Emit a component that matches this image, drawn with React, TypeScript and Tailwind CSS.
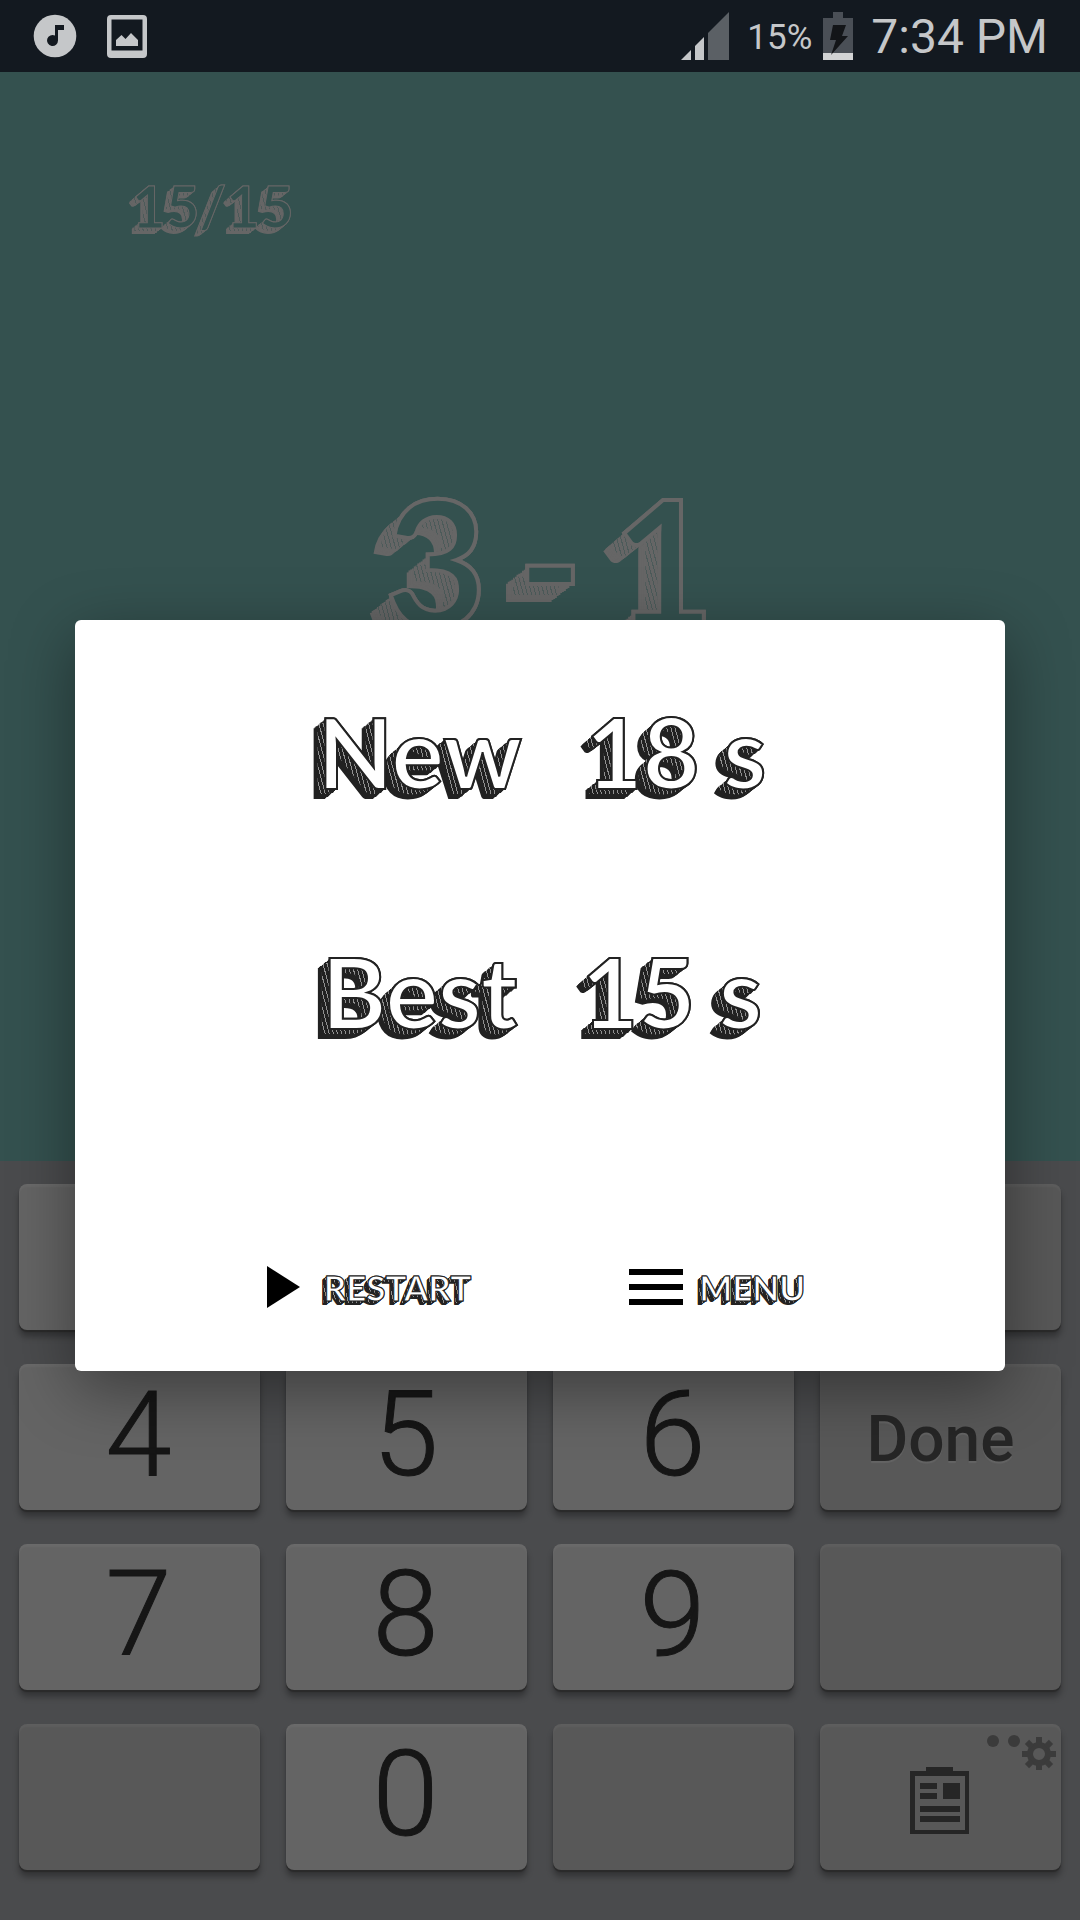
import React from "react";

type Tone = "paper" | "board";

const tones: Record<Tone, string> = {
  paper: "[--ink:#222222] [--face:#ffffff] [--fleck:#ffffff]",
  board: "[--ink:#666666] [--face:#34514f] [--fleck:#34514f]",
};

/** Hand-drawn block lettering: outlined face, hatched side, solid extrusion. */
function Sketch({ text, tone, className }: { text: string; tone: Tone; className: string }) {
  return (
    <span
      data-text={text}
      className={`relative isolate inline-block whitespace-pre font-['Lato',sans-serif] font-bold text-[var(--face)] before:absolute before:top-[0.06em] before:left-[-0.08em] before:-z-10 before:bg-[repeating-linear-gradient(75deg,var(--fleck)_0px,var(--fleck)_1px,transparent_1px,transparent_4px)] before:bg-clip-text before:text-transparent before:opacity-50 before:content-[attr(data-text)] before:[-webkit-text-stroke:0] after:absolute after:top-0 after:left-0 after:-z-20 after:text-[var(--ink)] after:content-[attr(data-text)] after:[text-shadow:-0.01em_0.01em_var(--ink),-0.02em_0.02em_var(--ink),-0.03em_0.03em_var(--ink),-0.04em_0.04em_var(--ink),-0.05em_0.045em_var(--ink),-0.06em_0.05em_var(--ink),-0.07em_0.06em_var(--ink),-0.08em_0.07em_var(--ink),-0.09em_0.08em_var(--ink),-0.1em_0.085em_var(--ink),-0.11em_0.09em_var(--ink),-0.12em_0.1em_var(--ink)] ${tones[tone]} ${className}`}
    >
      {text}
    </span>
  );
}

function StatusBar() {
  return (
    <header className="flex h-[72px] items-center justify-between bg-[#131920] pr-8 pl-[33px] font-['Roboto',sans-serif] text-[#c5c7c9]">
      <div className="flex items-center gap-[30px]">
        <svg viewBox="0 0 44 44" className="size-11" aria-label="Music">
          <circle cx="22" cy="22" r="21.3" fill="#c5c7c9" />
          <path d="M22 11h9v5h-6v10.500a5.500 5.500 0 1 1-3-4.900z" fill="#131920" />
        </svg>
        <svg viewBox="0 0 40 43" className="h-[43px] w-10" aria-label="Picture">
          <path
            fillRule="evenodd"
            d="M4 0h32a4 4 0 0 1 4 4v35a4 4 0 0 1-4 4H4a4 4 0 0 1-4-4V4a4 4 0 0 1 4-4zM4.500 4.500v31h31v-31z"
            fill="#c5c7c9"
          />
          <path d="M9 31v-6l5.500-5 4 4 5.500-6 7 7v6z" fill="#c5c7c9" />
        </svg>
      </div>
      <div className="flex items-center">
        <svg viewBox="0 0 48 48" className="mr-[18px] size-12" aria-label="Signal strength">
          <path d="M0 48l10-10v10z" fill="#c5c7c9" />
          <path d="M14 48V34l9-9v23z" fill="#c5c7c9" />
          <path d="M27 48V21L48 0v48z" fill="#5b6065" />
        </svg>
        <span className="pt-1 text-[35px]">15%</span>
        <svg viewBox="0 0 30 48" className="mr-[18px] ml-[11px] h-12 w-[30px]" aria-label="Battery charging">
          <path d="M10 0h10v6h10v35H0V6h10z" fill="#4a4f56" />
          <path d="M0 41h30v7H0z" fill="#d2d3d4" />
          <path d="M10 13h13l-4 11h6L8 43l5-15H7z" fill="#131518" />
        </svg>
        <span className="pt-[2px] text-5xl">7:34 PM</span>
      </div>
    </header>
  );
}

const keyBase =
  "relative flex h-[146px] items-center justify-center rounded-lg shadow-[0_2px_1px_#2a2a2a,0_7px_6px_rgba(0,0,0,0.3),inset_0_3px_2px_rgba(255,255,255,0.04)]";

function NumberKey({ name, label }: { name: string; label?: string }) {
  return (
    <button
      aria-label={name}
      className={`${keyBase} bg-[#646464] pr-[2px] pb-[6px] font-['Roboto',sans-serif] text-[119px] leading-none font-light text-[#161616] [-webkit-text-stroke:1px_#161616]`}
    >
      {label}
    </button>
  );
}

function FunctionKey({ name, children }: { name: string; children?: React.ReactNode }) {
  return (
    <button aria-label={name} className={`${keyBase} bg-[#585858] text-[#262626]`}>
      {children}
    </button>
  );
}

function ClipboardIcon() {
  return (
    <svg viewBox="0 0 59 67" className="mt-[6px] mr-[2px] h-[67px] w-[59px]" fill="#262626">
      <path fillRule="evenodd" d="M0 4h16V0h27v4h16v63H0zM5 9v54h50V9z" />
      <path d="M10 16h17v6H10zM10 26h17v6H10zM33 16h17v16H33zM10 39h40v6H10zM10 49h40v6H10z" />
    </svg>
  );
}

function SettingsHint() {
  return (
    <svg viewBox="0 0 70 36" className="absolute top-[10px] right-[5px] h-9 w-[70px]" fill="#3b3b3b">
      <circle cx="7" cy="7" r="6" />
      <circle cx="28" cy="7" r="6" />
      <g transform="translate(53 20)">
        <path fillRule="evenodd" d="M0-12a12 12 0 1 0 0 24a12 12 0 1 0 0-24zM0-6a6 6 0 1 1 0 12a6 6 0 1 1 0-12z" />
        {[0, 45, 90, 135, 180, 225, 270, 315].map((a) => (
          <path key={a} d="M-3-17h6v7h-6z" transform={`rotate(${a})`} />
        ))}
      </g>
    </svg>
  );
}

function Keyboard() {
  return (
    <section className="grid grid-cols-4 gap-x-[26px] gap-y-[34px] bg-[#4a4b4d] px-[19px] pt-[23px] pb-[50px]">
      <NumberKey name="One" />
      <NumberKey name="Two" />
      <NumberKey name="Three" />
      <FunctionKey name="Delete" />
      <NumberKey name="Four" label="4" />
      <NumberKey name="Five" label="5" />
      <NumberKey name="Six" label="6" />
      <FunctionKey name="Done">
        <span className="pt-[6px] font-['Roboto',sans-serif] text-[64px] leading-none font-medium [text-shadow:0_2px_1px_#646464]">
          Done
        </span>
      </FunctionKey>
      <NumberKey name="Seven" label="7" />
      <NumberKey name="Eight" label="8" />
      <NumberKey name="Nine" label="9" />
      <FunctionKey name="Next" />
      <FunctionKey name="Blank" />
      <NumberKey name="Zero" label="0" />
      <FunctionKey name="Symbols" />
      <FunctionKey name="Clipboard and settings">
        <ClipboardIcon />
        <SettingsHint />
      </FunctionKey>
    </section>
  );
}

const scoreText = "text-[98px] leading-[120px] [-webkit-text-stroke:2px_var(--ink)]";
const actionText = "text-[35px] leading-[42px] [-webkit-text-stroke:1px_var(--ink)]";
const sumText = "text-[176px] leading-[208px] [-webkit-text-stroke:4px_var(--ink)]";

function ScoreRow({ label, value }: { label: string; value: string }) {
  return (
    <div className="flex justify-center gap-16 pl-1">
      <Sketch text={label} tone="paper" className={scoreText} />
      <Sketch text={value} tone="paper" className={scoreText} />
    </div>
  );
}

function ResultDialog() {
  return (
    <div className="absolute inset-0 flex items-center px-[75px] pb-[2px]">
      <div
        role="dialog"
        aria-label="Result"
        className="flex w-full flex-col rounded-md bg-white pt-[71px] pb-[63px] shadow-[0_18px_64px_rgba(0,0,0,0.4)]"
      >
        <div className="flex flex-col gap-[120px]">
          <ScoreRow label="New" value="18 s" />
          <ScoreRow label="Best" value="15 s" />
        </div>
        <div className="mt-[215px] flex items-center justify-center gap-[158px] pr-2">
          <button className="flex items-center gap-6">
            <svg viewBox="0 0 33 42" className="h-[42px] w-[33px]">
              <path d="M0 0l33 21L0 42z" />
            </svg>
            <Sketch text="RESTART" tone="paper" className={actionText} />
          </button>
          <button className="flex items-center gap-4">
            <svg viewBox="0 0 54 36" className="h-9 w-[54px]">
              <path d="M0 0h54v6H0zM0 15h54v6H0zM0 30h54v6H0z" />
            </svg>
            <Sketch text="MENU" tone="paper" className={actionText} />
          </button>
        </div>
      </div>
    </div>
  );
}

export default function App() {
  return (
    <div className="flex min-h-screen flex-col overflow-hidden bg-[#34514f]">
      <StatusBar />
      <div className="relative flex flex-1 flex-col">
        <main className="flex flex-1 flex-col">
          <div className="px-[132px] pt-[94px]">
            <Sketch text="15/15" tone="board" className="text-[58px] leading-[80px] [-webkit-text-stroke:1px_var(--ink)]" />
          </div>
          <div className="mt-[210px] flex justify-center gap-[30px] pl-5">
            <Sketch text="3" tone="board" className={sumText} />
            <Sketch text="-" tone="board" className={sumText} />
            <Sketch text="1" tone="board" className={sumText} />
          </div>
        </main>
        <Keyboard />
        <ResultDialog />
      </div>
    </div>
  );
}
